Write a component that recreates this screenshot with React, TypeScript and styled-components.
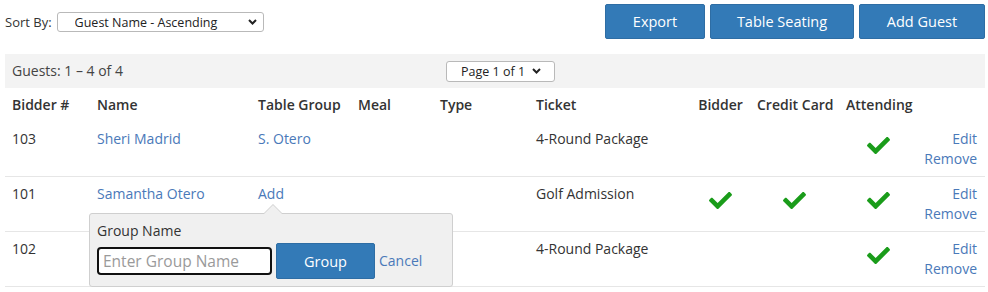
import React from "react";
import styled, { createGlobalStyle } from "styled-components";

const Global = createGlobalStyle`
  html, body { margin: 0; padding: 0; background: #fff; }
  body { font-family: "Open Sans", "Liberation Sans", sans-serif; font-size: 14px; color: #333; line-height: 20px; }
  * { box-sizing: border-box; }
`;

const Page = styled.div`
  width: 980px;
  margin-left: 5px;
`;

const Toolbar = styled.div`
  display: flex;
  justify-content: space-between;
  align-items: flex-start;
  padding-top: 4px;
  height: 54px;
`;

const SortGroup = styled.div`
  display: flex;
  align-items: center;
  gap: 5px;
  padding-top: 8px;
`;

const Label = styled.span`
  font-size: 13px;
  color: #333;
`;

const SelectWrap = styled.div<{ $w: number; $h: number }>`
  position: relative;
  width: ${(p) => p.$w}px;
  height: ${(p) => p.$h}px;
  border: 1px solid #b9b9b9;
  border-radius: 3px;
  background: #fff;
`;

const NativeSelect = styled.select<{ $pl: number }>`
  appearance: none;
  -webkit-appearance: none;
  border: none;
  background: transparent;
  width: 100%;
  height: 100%;
  padding: 0 0 0 ${(p) => p.$pl}px;
  font-family: "Open Sans", "Liberation Sans", sans-serif;
  font-size: 12.5px;
  color: #222;
  outline: none;
  display: block;
`;

const Chevron = styled.svg<{ $r: number }>`
  position: absolute;
  right: ${(p) => p.$r}px;
  top: 50%;
  margin-top: -3px;
  pointer-events: none;
`;

const Buttons = styled.div`
  display: flex;
  gap: 5px;
`;

const Button = styled.button<{ $w: number; $h?: number }>`
  width: ${(p) => p.$w}px;
  height: ${(p) => p.$h ?? 35}px;
  background: #337ab7;
  border: 1px solid #2e6da4;
  border-radius: 2px;
  color: #fff;
  font-family: "Open Sans", "Liberation Sans", sans-serif;
  font-size: 14.5px;
  padding: 0;
  cursor: pointer;
`;

const InfoBar = styled.div`
  background: #f3f3f3;
  height: 34px;
  display: grid;
  grid-template-columns: 434px auto 1fr;
  align-items: center;
  padding-left: 7px;
`;

const InfoText = styled.span`
  color: #444;
`;

const Table = styled.table`
  width: 980px;
  table-layout: fixed;
  border-collapse: collapse;
`;

const Th = styled.th<{ $center?: boolean }>`
  font-weight: 600;
  text-align: ${(p) => (p.$center ? "center" : "left")};
  padding: 7px 7px;
  color: #333;
  white-space: nowrap;
`;

const Tr = styled.tr`
  border-bottom: 1px solid #e6e6e6;
`;

const Td = styled.td<{ $align?: string }>`
  padding: 7px 7px;
  vertical-align: top;
  text-align: ${(p) => p.$align ?? "left"};
  color: #333;
`;

const ActionTd = styled.td`
  padding: 7px 8px 7px 0;
  vertical-align: top;
  text-align: right;
`;

const Link = styled.a`
  color: #4a79b9;
  text-decoration: none;
  cursor: pointer;
`;

const ActionLink = styled(Link)`
  display: block;
`;

const Check = styled.svg`
  display: block;
  margin: 8px auto 0;
`;

const Anchor = styled.span`
  position: relative;
  display: inline-block;
`;

const Popover = styled.div`
  position: absolute;
  left: -169px;
  top: 29px;
  width: 364px;
  height: 74px;
  background: #f0f0f0;
  border: 1px solid #cfcfcf;
  border-radius: 3px;
  padding: 7px 7px;
  z-index: 2;
`;

const Arrow = styled.div`
  position: absolute;
  top: -10px;
  left: 173px;
  width: 0;
  height: 0;
  border-left: 10px solid transparent;
  border-right: 10px solid transparent;
  border-bottom: 10px solid #cfcfcf;
  &::after {
    content: "";
    position: absolute;
    left: -9px;
    top: 1px;
    border-left: 9px solid transparent;
    border-right: 9px solid transparent;
    border-bottom: 9px solid #f0f0f0;
  }
`;

const PopLabel = styled.div`
  color: #333;
`;

const PopRow = styled.div`
  display: flex;
  align-items: center;
  gap: 4px;
  margin-top: 2px;
`;

const Input = styled.input`
  width: 175px;
  height: 28px;
  border: 2px solid #111;
  border-radius: 4px;
  padding: 0 4px;
  font-family: "Open Sans", "Liberation Sans", sans-serif;
  font-size: 15.5px;
  color: #333;
  outline: none;
  &::placeholder { color: #9a9a9a; }
`;

type Guest = {
  bidder: string;
  name: string;
  group?: string;
  ticket: string;
  bidderOk: boolean;
  card: boolean;
  attending: boolean;
  popover?: boolean;
};

const guests: Guest[] = [
  { bidder: "103", name: "Sheri Madrid", group: "S. Otero", ticket: "4-Round Package", bidderOk: false, card: false, attending: true },
  { bidder: "101", name: "Samantha Otero", ticket: "Golf Admission", bidderOk: true, card: true, attending: true, popover: true },
  { bidder: "102", name: "", ticket: "4-Round Package", bidderOk: false, card: false, attending: true },
];

const CheckIcon = () => (
  <Check width="23" height="17" viewBox="0 71 512 370">
    <path
      fill="#1a9c1a"
      d="M173.898 439.404l-166.4-166.4c-9.997-9.997-9.997-26.206 0-36.204l36.203-36.204c9.997-9.998 26.207-9.998 36.204 0L192 312.69 432.095 72.596c9.997-9.997 26.207-9.997 36.204 0l36.203 36.204c9.997 9.997 9.997 26.206 0 36.204l-294.4 294.401c-9.998 9.997-26.207 9.997-36.204-.001z"
    />
  </Check>
);

const ChevronIcon = ({ right }: { right: number }) => (
  <Chevron $r={right} width="9" height="6" viewBox="0 0 9 6">
    <polyline points="1,1 4.5,4.5 8,1" fill="none" stroke="#222" strokeWidth="2" />
  </Chevron>
);

export default function App() {
  return (
    <>
      <Global />
      <Page>
        <Toolbar>
          <SortGroup>
            <Label>Sort By:</Label>
            <SelectWrap $w={207} $h={20}>
              <NativeSelect $pl={17} defaultValue="gna">
                <option value="gna">Guest Name - Ascending</option>
                <option value="gnd">Guest Name - Descending</option>
              </NativeSelect>
              <ChevronIcon right={6} />
            </SelectWrap>
          </SortGroup>
          <Buttons>
            <Button $w={100}>Export</Button>
            <Button $w={144}>Table Seating</Button>
            <Button $w={126}>Add Guest</Button>
          </Buttons>
        </Toolbar>
        <InfoBar>
          <InfoText>Guests: 1 – 4 of 4</InfoText>
          <SelectWrap $w={109} $h={21}>
            <NativeSelect $pl={14} defaultValue="1">
              <option value="1">Page 1 of 1</option>
            </NativeSelect>
            <ChevronIcon right={13} />
          </SelectWrap>
          <span />
        </InfoBar>
        <Table>
          <colgroup>
            <col style={{ width: 85 }} />
            <col style={{ width: 161 }} />
            <col style={{ width: 100 }} />
            <col style={{ width: 82 }} />
            <col style={{ width: 96 }} />
            <col style={{ width: 162 }} />
            <col style={{ width: 59 }} />
            <col style={{ width: 89 }} />
            <col style={{ width: 79 }} />
            <col style={{ width: 67 }} />
          </colgroup>
          <thead>
            <tr>
              <Th>Bidder #</Th>
              <Th>Name</Th>
              <Th>Table Group</Th>
              <Th>Meal</Th>
              <Th>Type</Th>
              <Th>Ticket</Th>
              <Th $center>Bidder</Th>
              <Th $center>Credit Card</Th>
              <Th $center>Attending</Th>
              <Th />
            </tr>
          </thead>
          <tbody>
            {guests.map((g) => (
              <Tr key={g.bidder}>
                <Td>{g.bidder}</Td>
                <Td>{g.name && <Link>{g.name}</Link>}</Td>
                <Td>
                  {g.group ? (
                    <Link>{g.group}</Link>
                  ) : g.popover ? (
                    <Anchor>
                      <Link>Add</Link>
                      <Popover>
                        <Arrow />
                        <PopLabel>Group Name</PopLabel>
                        <PopRow>
                          <Input placeholder="Enter Group Name" />
                          <Button $w={99} $h={36}>Group</Button>
                          <Link>Cancel</Link>
                        </PopRow>
                      </Popover>
                    </Anchor>
                  ) : null}
                </Td>
                <Td />
                <Td />
                <Td>{g.ticket}</Td>
                <Td $align="center">{g.bidderOk && <CheckIcon />}</Td>
                <Td $align="center">{g.card && <CheckIcon />}</Td>
                <Td $align="center">{g.attending && <CheckIcon />}</Td>
                <ActionTd>
                  <ActionLink>Edit</ActionLink>
                  <ActionLink>Remove</ActionLink>
                </ActionTd>
              </Tr>
            ))}
          </tbody>
        </Table>
      </Page>
    </>
  );
}
